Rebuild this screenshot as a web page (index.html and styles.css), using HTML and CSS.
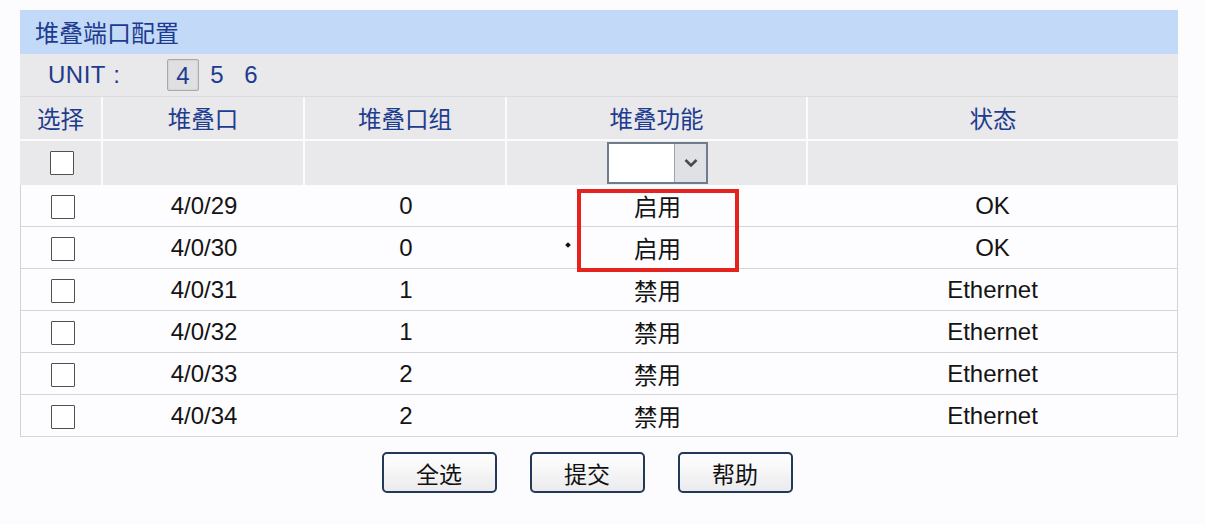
FILE: index.html
```html
<!DOCTYPE html>
<html lang="zh-CN">
<head>
<meta charset="utf-8">
<title>堆叠端口配置</title>
<link rel="stylesheet" href="styles.css">
</head>
<body>
<div class="panel">
  <div class="title">堆叠端口配置</div>
  <div class="unit-row">
    <span class="unit-label">UNIT&nbsp;:</span>
    <div class="units">
      <span class="unit active">4</span>
      <span class="unit">5</span>
      <span class="unit">6</span>
    </div>
  </div>
  <table class="grid">
    <colgroup>
      <col class="c1"><col class="c2"><col class="c3"><col class="c4"><col class="c5">
    </colgroup>
    <thead>
      <tr class="head">
        <th>选择</th><th>堆叠口</th><th>堆叠口组</th><th>堆叠功能</th><th class="last">状态</th>
      </tr>
      <tr class="filter">
        <td><span class="cb"></span></td>
        <td></td>
        <td></td>
        <td>
          <div class="select">
            <span class="sel-val"></span>
            <span class="sel-btn"><svg width="14" height="10" viewBox="0 0 14 10"><path d="M1.5 2 L7 7.5 L12.5 2" fill="none" stroke="#4a4a4a" stroke-width="2.6"/></svg></span>
          </div>
        </td>
        <td class="last"></td>
      </tr>
    </thead>
    <tbody>
      <tr><td><span class="cb"></span></td><td>4/0/29</td><td>0</td><td class="cjk">启用</td><td>OK</td></tr>
      <tr><td><span class="cb"></span></td><td>4/0/30</td><td>0</td><td class="cjk">启用</td><td>OK</td></tr>
      <tr><td><span class="cb"></span></td><td>4/0/31</td><td>1</td><td class="cjk">禁用</td><td>Ethernet</td></tr>
      <tr><td><span class="cb"></span></td><td>4/0/32</td><td>1</td><td class="cjk">禁用</td><td>Ethernet</td></tr>
      <tr><td><span class="cb"></span></td><td>4/0/33</td><td>2</td><td class="cjk">禁用</td><td>Ethernet</td></tr>
      <tr><td><span class="cb"></span></td><td>4/0/34</td><td>2</td><td class="cjk">禁用</td><td>Ethernet</td></tr>
    </tbody>
  </table>
  <div class="actions">
    <button class="btn">全选</button>
    <button class="btn">提交</button>
    <button class="btn">帮助</button>
  </div>
  <div class="highlight"></div>
  <div class="dot"></div>
</div>
</body>
</html>
```

FILE: styles.css
```css
html, body {
  margin: 0;
  padding: 0;
  background: #fcfbfd;
}
body {
  font-family: "Liberation Sans", "Noto Sans CJK SC", sans-serif;
  color: #111;
}
.panel {
  position: relative;
  margin: 10px 0 0 20px;
  width: 1158px;
}
.title {
  height: 44px;
  line-height: 44px;
  background: #c3d9f8;
  padding-left: 15px;
  font-family: "Noto Sans CJK SC", sans-serif;
  font-size: 24px;
  color: #1d3c8f;
}
.unit-row {
  display: flex;
  align-items: center;
  height: 42px;
  background: #e9e8ea;
  border-bottom: 1px solid #dcdbdd;
  padding-left: 28px;
  color: #1d3c8f;
  font-size: 24px;
}
.unit-label {
  width: 119px;
  letter-spacing: 0.5px;
}
.units {
  display: flex;
  gap: 2px;
}
.unit {
  width: 32px;
  height: 32px;
  line-height: 32px;
  text-align: center;
  box-sizing: border-box;
}
.unit.active {
  background: #e0dfe1;
  border: 1px solid #a9a8aa;
  border-radius: 2px;
  box-shadow: inset 0 0 2px rgba(0,0,0,0.15);
}
.grid {
  width: 1158px;
  border-collapse: separate;
  border-spacing: 0;
  table-layout: fixed;
}
.c1 { width: 83px; }
.c2 { width: 202px; }
.c3 { width: 202px; }
.c4 { width: 301px; }
.c5 { width: 370px; }
.grid th, .grid td {
  padding: 0;
  text-align: center;
  vertical-align: middle;
}
.head th {
  height: 42px;
  background: #e9e8ea;
  border-right: 2px solid #fbfbfc;
  border-bottom: 2px solid #fbfbfc;
  font-family: "Noto Sans CJK SC", sans-serif;
  font-weight: normal;
  font-size: 23.5px;
  color: #1d3c8f;
}
.filter td {
  height: 44px;
  background: #e9e8ea;
  border-right: 2px solid #fbfbfc;
}
.head .last, .filter .last {
  border-right: none;
}
tbody td {
  height: 41px;
  background: #fdfcfe;
  border-bottom: 1px solid #d6d5d8;
  font-size: 24px;
  color: #141414;
}
tbody td:first-child {
  border-left: 1px solid #d3d2d5;
}
tbody td:last-child {
  border-right: 1px solid #d3d2d5;
}
tbody td.cjk {
  font-family: "Noto Sans CJK SC", sans-serif;
  font-size: 23.5px;
}
.cb {
  display: inline-block;
  width: 22px;
  height: 22px;
  border: 1.5px solid #505050;
  background: #fff;
  border-radius: 1px;
  vertical-align: middle;
  margin-left: 2px;
}
.select {
  display: inline-flex;
  width: 101px;
  height: 42px;
  box-sizing: border-box;
  border: 2px solid #6f7c8c;
  background: #fff;
  vertical-align: middle;
  margin-left: 2px;
}
.sel-val {
  flex: 1;
}
.sel-btn {
  width: 31px;
  display: flex;
  align-items: center;
  justify-content: center;
  background: #dfe1e5;
  border-left: 1px solid #9aa3ae;
}
.actions {
  display: flex;
  justify-content: center;
  gap: 33px;
  padding: 15px 24px 0 0;
}
.btn {
  width: 115px;
  height: 41px;
  border: 2px solid #24395a;
  border-radius: 5px;
  background: linear-gradient(#ffffff, #ebebed);
  font-family: "Noto Sans CJK SC", sans-serif;
  font-size: 23px;
  color: #111;
  padding: 0;
}
.highlight {
  position: absolute;
  left: 557px;
  top: 179px;
  width: 162px;
  height: 83px;
  box-sizing: border-box;
  border: 4px solid #e5221e;
}
.dot {
  position: absolute;
  left: 546px;
  top: 233px;
  width: 4px;
  height: 4px;
  background: #111;
  transform: rotate(45deg);
}
```
